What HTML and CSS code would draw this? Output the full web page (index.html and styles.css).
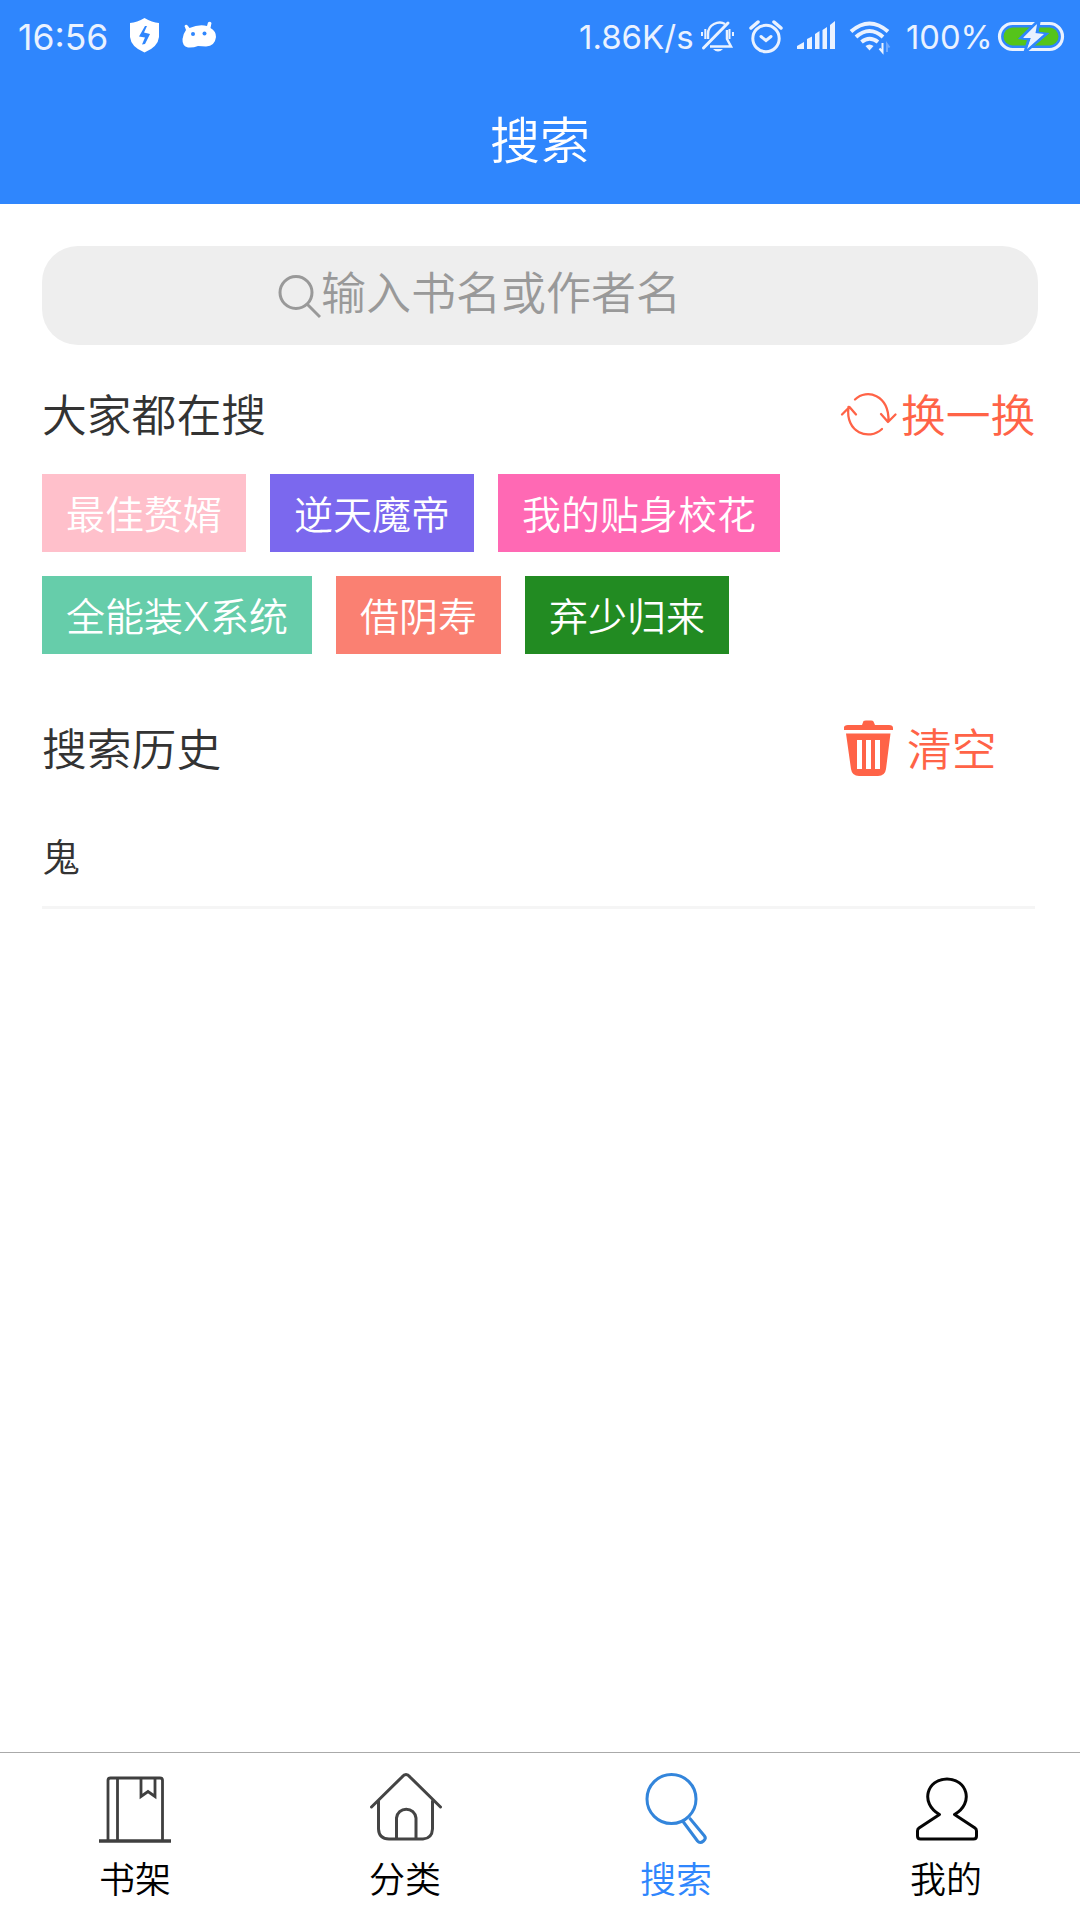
FILE: index.html
```html
<!DOCTYPE html>
<html lang="zh-CN">
<head>
<meta charset="UTF-8">
<title>搜索</title>
<link rel="stylesheet" href="styles.css">
</head>
<body>
<div class="app">
  <header class="header">
    <div class="status">
      <span class="time">16:56</span>
      <svg class="status-left" viewBox="125 0 95 60" width="95" height="60">
        <path fill="#fff" d="M144.500 18 Q152 22.500 159 23 V37 Q158 47 144.500 52.500 Q131 47 130 37 V23 Q137 22.500 144.500 18Z"/>
        <path fill="#2f86fd" d="M145 26 L139 36.500 L145 37.500 L142 44.500 L145 44 L150 34 L144 32.500 L147 26Z"/>
        <path fill="#fff" d="M186 30 L184.500 26 Q186 23.500 188 26 L189.500 28 Q199 24 207 26 L208 22.500 Q210 21 211.500 23 L210.500 28 Q216 31 216 37 Q215 46 206 46.500 L198 46 Q193 48 188 47.500 Q182 46 182.500 39 Q183 34 186 30Z"/>
        <circle cx="193" cy="34" r="2" fill="#2f86fd"/><circle cx="204.500" cy="33.500" r="2" fill="#2f86fd"/>
      </svg>
      <span class="speed">1.86K/s</span>
      <svg class="status-icons" viewBox="700 0 195 60" width="195" height="60" fill="none" stroke="#eaf2ff" stroke-width="2.500">
        <path d="M725 24 Q720 21 714 24 Q708 27 708 34 V39 M727 30 V39 L731 46.500 H710" />
        <path d="M728 23 L703.500 48" stroke-width="3" stroke-linecap="round"/>
        <path d="M702 32 V36 M705.300 29 V39 M729.500 29 V39 M733 32 V36" stroke-width="2"/>
        <path d="M713 49 H723 Q718 54 713 49Z" fill="#eaf2ff" stroke="none"/>
        <circle cx="766" cy="38.500" r="13.200" stroke-width="3"/>
        <path d="M761 36.500 L766 40.500 L771 36.500" stroke-width="3" stroke-linecap="round"/>
        <path d="M751 28 L758 22 M774 22 L781 28" stroke-width="3.500" stroke-linecap="round"/>
        <path fill="#eaf2ff" stroke="none" d="M797 46 L804 42 V49 H797Z M807 39 L812 36.500 V49 H807Z M815 34 L819.500 31 V49 H815Z M822.500 30 L827 27 V49 H822.500Z M830 25 L835 21 V49 H830Z"/>
        <g stroke-width="4"><path d="M851 31.500 Q869.500 15.500 888 31.500"/><path d="M856 37 Q869.500 25 883 37"/><path d="M861.500 42 Q869.500 35.500 878 42"/></g>
        <path d="M865.500 46 Q869.500 43 873.500 46 L869.500 50.500Z" fill="#eaf2ff" stroke="none"/>
        <path d="M882.500 43 V52 L879.500 48.500" stroke-width="2"/><path d="M887 52 V44 L889.500 47.500" stroke="#6ea9ff" stroke-width="2"/>
      </svg>
      <span class="percent">100%</span>
      <svg class="battery" viewBox="995 0 72 60" width="72" height="60">
        <rect x="999.500" y="23.500" width="63" height="26" rx="13" fill="none" stroke="#eaf2ff" stroke-width="3.200"/>
        <rect x="1003.500" y="27.500" width="55" height="18" rx="9" fill="#55c41a"/>
        <path d="M1037 22 L1021 38 L1029 39 L1025 52 L1046 34 L1037 33 L1039 22Z" fill="#eaf2ff" stroke="#2f86fd" stroke-width="3"/>
        <path d="M1036 25 L1023 38 H1031 L1027 49 L1044 34 L1035 33Z" fill="#eaf2ff"/>
      </svg>
    </div>
    <h1 class="title">搜索</h1>
  </header>

  <main class="content">
    <div class="search">
      <svg viewBox="277 273 44 46" width="44" height="46" fill="none" stroke="#999" stroke-width="3"><circle cx="296" cy="292.500" r="16"/><path d="M307.500 304.500 L320 317"/></svg>
      <span>输入书名或作者名</span>
    </div>

    <section class="section-head">
      <h2>大家都在搜</h2>
      <div class="action refresh">
        <svg viewBox="840 388 58 54" width="58" height="54" fill="none" stroke="#ff6347" stroke-width="2.300" stroke-linecap="round" stroke-linejoin="round">
          <path d="M855 400.500 C867 389 889 396 888.500 422 M881 415 L888 423 L895.500 415.500 M882 430 C869 442 845 434 848.500 408 M842 415.500 L849.500 408 L856 415.500"/>
        </svg>
        <span>换一换</span>
      </div>
    </section>
    <div class="tags">
      <span class="tag pink">最佳赘婿</span><span class="tag purple">逆天魔帝</span><span class="tag hot">我的贴身校花</span><span class="tag aqua">全能装<i>X</i>系统</span><span class="tag salmon">借阴寿</span><span class="tag green">弃少归来</span>
    </div>

    <section class="section-head history-head">
      <h2>搜索历史</h2>
      <div class="action clear">
        <svg viewBox="842 718 54 60" width="54" height="60" fill="#ff6347">
          <path d="M844 730 V727.500 Q844 725 848 725 H862 L863.500 721 Q864 720.500 866 720.500 H871 Q873 720.500 873.500 721.500 L875 725 H889 Q893 725 893 728 V730Z"/>
          <path fill-rule="evenodd" d="M846 733.500 H890.500 L886 769 Q885 776 878 776 H859 Q852 776 851 769Z M857 740 V769 H862 V740Z M866 740 V769 H871 V740Z M875 740 V769 H880 V740Z"/>
        </svg>
        <span>清空</span>
      </div>
    </section>
    <div class="history-item">鬼</div>
  </main>

  <nav class="tabs">
    <div class="tab">
      <svg viewBox="97 1770 76 76" width="76" height="76" fill="none" stroke="#3f3f3f" stroke-width="2.800"><path d="M108 1840 V1780.500 Q108 1778 110.500 1778 H160 Q162.500 1778 162.500 1780.500 V1840 M117.500 1778 V1840"/><path d="M141 1778 V1796.500 L148 1791.500 L155 1796.500 V1778"/><path d="M99 1841 H171" stroke-width="3.500"/></svg>
      <span>书架</span>
    </div>
    <div class="tab">
      <svg viewBox="367 1770 76 76" width="76" height="76" fill="none" stroke="#444" stroke-width="3" stroke-linecap="round"><path d="M371.500 1807 L402 1777 Q406 1772 410 1777 L440.500 1807 M378.500 1801 V1829 Q379 1839 389 1839 H423 Q432 1838.500 432.500 1829 V1801 M396.500 1838 V1818 A9.800 9.800 0 0 1 416 1818 V1838"/></svg>
      <span>分类</span>
    </div>
    <div class="tab active">
      <svg viewBox="637 1770 76 76" width="76" height="76" fill="none" stroke="#3385db" stroke-width="3"><circle cx="671.500" cy="1799" r="24.500"/><path d="M683 1821.500 L697.500 1841 Q700 1844 703.500 1841 Q706.500 1838.500 704.500 1836 L689.500 1818" stroke-linejoin="round"/></svg>
      <span>搜索</span>
    </div>
    <div class="tab">
      <svg viewBox="907 1770 76 76" width="76" height="76" fill="none" stroke="#050505" stroke-width="3" stroke-linejoin="round"><path d="M939.500 1814.500 C919.500 1803 927 1779 947 1779 C967 1779 974.500 1803 954.500 1814.500 L975 1828 Q976.500 1829 976.500 1831 V1836 Q976.500 1839 973.500 1839 H920.500 Q917.500 1839 917.500 1836 V1831 Q917.500 1829 919 1828Z"/></svg>
      <span>我的</span>
    </div>
  </nav>
</div>
</body>
</html>
```
FILE: styles.css
```css
* { box-sizing: border-box; }

body {
  margin: 0;
  background: #fff;
  color: #333;
  font-family: "Noto Sans CJK SC", sans-serif;
  font-weight: 350;
}

svg { display: block; flex: none; }

.app {
  width: 1080px;
  height: 1920px;
  display: flex;
  flex-direction: column;
}

.header {
  height: 204px;
  background: #2f86fd;
  color: #fff;
}

.status {
  height: 72px;
  display: flex;
  align-items: flex-start;
  color: #eaf2ff;
  font-family: Inter, sans-serif;
  font-weight: 400;
  line-height: 75px;
  white-space: nowrap;
}

.time { width: 125px; padding-left: 18px; font-size: 35.5px; }
.speed { width: 122px; margin-left: 358px; padding-left: 1px; font-size: 33px; }
.percent { width: 95px; padding-left: 11px; font-size: 32.7px; }
.battery { margin-left: 5px; }

.title {
  margin: 0;
  height: 132px;
  line-height: 130px;
  font-size: 50px;
  font-weight: 350;
  text-align: center;
}

.content {
  flex: 1;
  padding: 42px 42px 0;
}

.search {
  height: 99px;
  padding: 0 235px;
  display: flex;
  align-items: center;
  border-radius: 36px;
  background: #eee;
  color: #999;
  font-size: 45px;
  line-height: 90px;
  white-space: nowrap;
}

.search span { height: 99px; }

.section-head {
  height: 129px;
  display: flex;
  align-items: center;
  justify-content: space-between;
  font-size: 44.8px;
  line-height: 60px;
  padding-top: 9px;
}

.section-head h2,
.action span {
  height: 62px;
}

.section-head h2 {
  margin: 0;
  font-size: 44.8px;
  font-weight: 350;
}

.action {
  width: 198px;
  display: flex;
  align-items: center;
  color: #ff6347;
}

.refresh { gap: 3px; }
.clear { gap: 11px; width: 196px; }

.tags {
  display: flex;
  flex-wrap: wrap;
  gap: 24px;
  padding-right: 180px;
}

.tag {
  height: 78px;
  padding: 0 24px;
  color: #fff;
  font-size: 39px;
  line-height: 76px;
}

.tag i {
  display: inline-flex;
  justify-content: center;
  width: 27px;
  font-family: Inter, sans-serif;
  font-size: 40px;
  font-style: normal;
  font-weight: 300;
  line-height: 1;
}

.pink { background: #ffc0cb; }
.purple { background: #7b68ee; }
.hot { background: #ff69b4; }
.aqua { background: #66cdaa; }
.salmon { background: #fa8072; }
.green { background: #228b22; }

.history-head {
  height: 150px;
  margin-top: 16px;
  padding-top: 5px;
}

.history-item {
  width: 993px;
  height: 89px;
  font-size: 38px;
  line-height: 70px;
  border-bottom: 3px solid #f5f5f5;
}

.tabs {
  height: 168px;
  padding-top: 17px;
  display: flex;
  border-top: 1px solid #aaa;
  color: #000;
}

.tab {
  flex: 1;
  display: flex;
  flex-direction: column;
  align-items: center;
  font-size: 36px;
  line-height: 62px;
}

.tab:nth-child(n+3) span { padding-left: 2px; }

.active { color: #2f86fd; }
```
